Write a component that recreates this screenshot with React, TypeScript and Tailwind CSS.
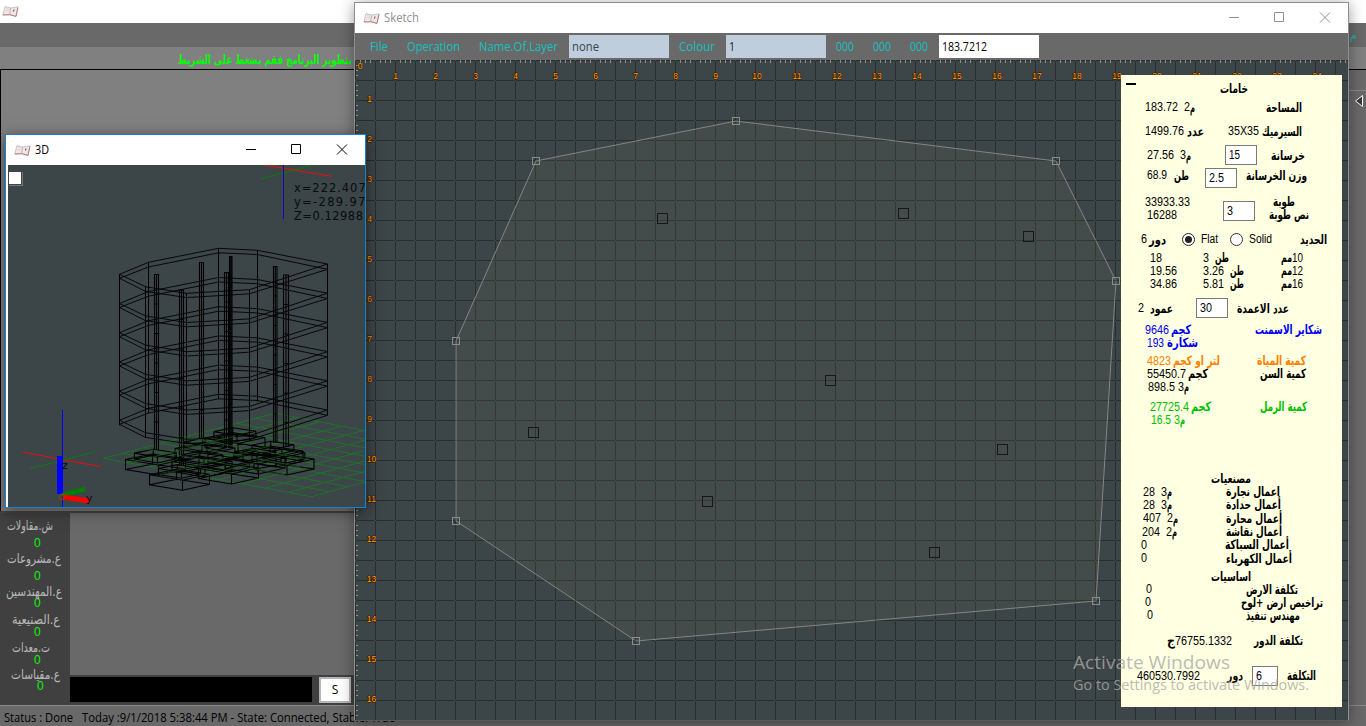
import { useLayoutEffect, useRef, type ReactNode } from "react";

/** Single line of text squeezed or stretched to the width of its box. */
function Fit({ c, t = "", children }: { c: string; t?: string; children: ReactNode }) {
  const box = useRef<HTMLSpanElement>(null);
  const text = useRef<HTMLSpanElement>(null);
  useLayoutEffect(() => {
    const fit = () => {
      if (!box.current || !text.current) return;
      text.current.style.transform = "none";
      const natural = text.current.getBoundingClientRect().width;
      if (natural > 0) text.current.style.transform = `scaleX(${box.current.clientWidth / natural})`;
    };
    fit();
    document.fonts.ready.then(fit);
    window.addEventListener("load", fit);
    return () => window.removeEventListener("load", fit);
  }, []);
  return (
    <span ref={box} className={"flex shrink-0 justify-start leading-none " + c}>
      <span ref={text} dir="auto" className={"inline-block shrink-0 origin-left whitespace-nowrap " + t}>
        {children}
      </span>
    </span>
  );
}

const N = ({ c, children }: { c: string; children: ReactNode }) => <Fit c={c}>{children}</Fit>;
const A = ({ c, children }: { c: string; children: ReactNode }) => (
  <Fit c={c} t="font-['DejaVu_Sans',sans-serif] text-[13px] leading-[13px] font-bold">
    {children}
  </Fit>
);
const Row = ({ c, children }: { c: string; children: ReactNode }) => (
  <div className={"flex shrink-0 items-center " + c}>{children}</div>
);
const Field = ({ c, children }: { c: string; children: ReactNode }) => (
  <div className={"flex h-5 shrink-0 items-center border border-[#7a7a7a] bg-white pl-[3px] " + c}>{children}</div>
);

function BookIcon() {
  return (
    <svg width="17" height="13" viewBox="0 0 17 13" className="shrink-0">
      <path d="M3 1.5 L8.5 3 L16 1.8 L14 11 L8 9.5 L.8 9.8 Z" fill="#ece8e7" stroke="#b9b3b1" strokeWidth=".7" />
      <path d="M.8 10 L8 9.8 L14 11.5 L16 2.5" fill="none" stroke="#b8625d" strokeWidth=".8" />
      <path d="M8.6 3 L7.6 9.5" stroke="#b3a8a6" strokeWidth=".8" />
      <path d="M11.5 6.500 L12 4.5" fill="none" stroke="#7a3b3b" strokeWidth="1" />
      <path d="M4 3.5 L7 4.2 M3.4 5.5 L6.6 6" stroke="#d5cfce" strokeWidth=".7" />
    </svg>
  );
}

function Caption({ tone, c }: { tone: string; c: string }) {
  return (
    <svg width="102" height="12" viewBox="0 0 102 12" stroke={tone} fill="none" className={"shrink-0 " + c}>
      <path d="M0 6.5H10" />
      <path d="M45.500 1.500h9v9h-9z" />
      <path d="M91 1.500l10 10M101 1.500l-10 10" />
    </svg>
  );
}

const range = (n: number) => Array.from({ length: n }, (_, i) => i);

const outline = [
  [536, 161], [736, 121], [1056, 161], [1116, 281],
  [1096, 601], [636, 641], [456, 521], [456, 341],
];
const columnsPlan = [
  [662, 218], [903, 213], [1028, 236], [830, 380],
  [533, 432], [1002, 449], [934, 552], [707, 501],
];

function SketchCanvas() {
  return (
    <svg width="993" height="660" viewBox="355 60 993 660" className="block">
      <rect x="355" y="60" width="993" height="660" fill="#3c4548" />
      <g shapeRendering="crispEdges">
        <g fill="#2a2c2d">
          {range(50).map((i) => <rect key={"v" + i} x={355 + i * 20} y="60" width="1" height="660" />)}
          {range(33).map((i) => <rect key={"h" + i} x="355" y={60 + i * 20} width="993" height="1" />)}
        </g>
        <g fill="#8c9090">
          {range(198).map((i) => <rect key={"t" + i} x={360 + i * 5} y="60" width="1" height="3" opacity={i % 4 === 3 ? 0 : 1} />)}
          {range(132).map((i) => <rect key={"l" + i} x="356" y={60 + i * 5} width="2" height="1" opacity={i % 4 === 0 ? 0 : 1} />)}
        </g>
      </g>
      <polygon points={outline.map((p) => p.join(",")).join(" ")} fill="#646658" fillOpacity=".2" stroke="#858585" strokeWidth="1" />
      <g fill="#0f7a14" shapeRendering="crispEdges">
        {range(50).map((i) => range(33).map((j) => (
          <rect key={i + "-" + j} x={355 + i * 20} y={60 + j * 20} width="1" height="1" />
        )))}
      </g>
      <g fill="none" stroke="#8c8c8c" shapeRendering="crispEdges">
        {outline.map(([x, y]) => <rect key={x + "," + y} x={x - 3.5} y={y - 3.5} width="7" height="7" />)}
      </g>
      <g fill="none" stroke="#151818" shapeRendering="crispEdges">
        {columnsPlan.map(([x, y]) => <rect key={x + "," + y} x={x - 4.5} y={y - 4.500} width="10" height="10" />)}
      </g>
      <g fontFamily="Liberation Sans, sans-serif" fontSize="8.500" fill="#ffa000" stroke="#3a1200" strokeWidth="1" paintOrder="stroke" textAnchor="middle">
        <text x="360" y="69">0</text>
        {range(24).map((i) => <text key={"x" + i} x={395.500 + i * 40 + (i > 8 ? 1.500 : 0)} y="79">{i + 1}</text>)}
        {range(16).map((i) => <text key={"y" + i} x={i > 8 ? 371.500 : 369.500} y={102 + i * 40}>{i + 1}</text>)}
      </g>
    </svg>
  );
}

const ring = [
  [119.5, 274.3, 4], [148.5, 262.3, 4.7], [218.5, 248.3, 4.500], [257.5, 250.3, 4.2],
  [327.5, 264, 5.300], [249.5, 289.7, 4.1], [186.5, 293.3, 4.3], [145.5, 286.7, 4.7],
];
const pillars = [
  [154.5, 158.5, 274.5, 450], [179.5, 183.5, 290, 466], [199.5, 203.5, 262.500, 438], [224.5, 228.5, 272.500, 448],
  [229.5, 232, 256.500, 448], [273.5, 277, 266.500, 443], [283.5, 288.500, 275, 447],
];
const footings = [
  [158.5, 465], [182.5, 480.300], [208, 454], [205, 467], [231.5, 474], [238, 443.500], [258, 464], [276, 457], [287, 465],
];

function slab(dy: number) {
  return ring.map(([x, y]) => `${x},${y + dy}`).join(" ");
}
function plate(x: number, y: number, s: number, h: number) {
  const l = [x - 33 * s, y - 5.500 * s];
  const r = [x + 27 * s, y - 6 * s];
  const b = [x - 6 * s, y - 11 * s];
  return (
    `M${l}L${x},${y}L${r}L${b}Z` +
    `M${l}v${h}L${x},${y + h}L${r[0]},${r[1] + h}v${-h}M${x},${y}v${h}M${b}v${h}L${l[0]},${l[1] + h}M${b[0]},${b[1] + h}L${r[0]},${r[1] + h}`
  );
}

function Model() {
  return (
    <svg width="357" height="342" viewBox="8 165 357 342" className="block bg-[#3c4548]">
      <g stroke="#22702c" strokeWidth="1">
        {range(10).map((i) => {
          const k = i / 9;
          return (
            <g key={i}>
              <path d={`M${103.3 + 208.4 * k},${458.3 + 38.4 * k}L${275 + 200 * k},${413.3 + 38.400 * k}`} />
              <path d={`M${103.3 + 171.7 * k},${458.3 - 45 * k}L${311.7 + 163.3 * k},${496.7 - 45 * k}`} />
            </g>
          );
        })}
      </g>
      <g fill="none" stroke="#000" strokeWidth=".9">
        {range(6).map((i) => (
          <g key={i}>
            <polygon points={slab(i * 29.2)} />
            <polygon points={ring.map(([x, y, h]) => `${x},${y + h + i * 29.2}`).join(" ")} />
          </g>
        ))}
        {ring.map(([x, y]) => <path key={x} d={`M${x},${y}v151`} strokeWidth="1" />)}
        {pillars.map(([a, b, t, e]) => (
          <g key={a}>
            <path d={`M${a},${e}V${t}H${b}V${e}M${(a + b) / 2},${t}V${e}`} strokeWidth="1.1" />
            {range(5).map((i) => <path key={i} d={`M${a},${t + 29.500 * (i + 1)}H${b}`} />)}
          </g>
        ))}
        {footings.map(([x, y]) => (
          <g key={x}>
            <path d={plate(x, y, 1, 10)} strokeWidth="1.100" />
            <path d={plate(x - 1, y - 8, 0.7, 6)} strokeWidth="1.1" />
          </g>
        ))}
      </g>
      <g stroke="#1c5a1c" strokeWidth=".7">
        <path d="M140 448L285 475M165 441L300 467M185 437L310 460M130 463L235 436M160 475L270 446M205 476L295 452" />
      </g>
      <g fill="none">
        <path d="M264.700 165L331.700 176.300M23 452.300L101 466.700" stroke="#ee0c0c" />
        <path d="M261.300 178.700L313.300 165M30 468.700L94.700 451.700" stroke="#0c7a12" />
        <path d="M283.500 165V219" stroke="#0b0bb0" />
        <path d="M62.500 410V507" stroke="#0000ff" />
        <path d="M60 456V494" stroke="#0000ff" strokeWidth="6" />
        <path d="M62 495.500L85 489" stroke="#008000" strokeWidth="4.500" />
        <path d="M63 497L89.500 501" stroke="#ff0000" strokeWidth="5" />
        <circle cx="62" cy="497" r="2.500" stroke="#8c4a10" />
      </g>
      <g fontFamily="DejaVu Sans, sans-serif" fill="#080c0c">
        <g fontSize="11.500" lengthAdjust="spacing">
          <text x="294" y="191.500" textLength="80">x=222.4073</text>
          <text x="294" y="205.500" textLength="80">y=-289.972</text>
          <text x="294" y="220" textLength="69">Z=0.12988</text>
        </g>
        <g fontSize="11">
          <text x="62" y="469">z</text>
          <text x="86" y="501.500">y</text>
          <text x="91" y="513">x</text>
        </g>
      </g>
    </svg>
  );
}

function Stat({ c, w, z, children }: { c: string; w: string; z: string; children: ReactNode }) {
  return (
    <div className={"flex shrink-0 flex-col " + c}>
      <Fit c={w} t="font-['DejaVu_Sans',sans-serif] text-[13.500px] leading-[15px] text-[#b8b8b8]">{children}</Fit>
      <span className={"mb-px text-[12px] leading-[13px] text-[#10f010] " + z}>0</span>
    </div>
  );
}

function MainWindow() {
  return (
    <div className="flex h-[726px] w-[1366px] flex-col bg-[#696969]">
      <div className="flex h-[23px] shrink-0 items-center bg-white pl-[2px]"><BookIcon /></div>
      <div className="flex h-6 shrink-0 items-center justify-end bg-[#696969] pr-[9px] text-[11px] text-[#18b8b8]">م</div>
      <div className="flex h-[22px] shrink-0 items-center bg-[#808080]">
        <Fit c="ml-[178px] w-[174px] pt-1" t="font-['DejaVu_Sans',sans-serif] text-[12.500px] leading-[14px] font-bold text-[#00ff00]">
          بتطوير البرنامج فقم بضغط على الشريط
        </Fit>
      </div>
      <div className="flex h-[442px] shrink-0 border-t border-l border-black bg-[#808080]">
        <div className="ml-auto flex w-[19px] flex-col bg-[#696969]">
          <div className="h-[21px] border-b border-[#8a8a8a]" />
          <svg width="11" height="14" viewBox="0 0 11 14" className="mt-[3px] ml-[7px]">
            <path d="M8.500 1.500V12.500L1.500 7Z" fill="#3a3a3a" stroke="#fff" />
          </svg>
        </div>
      </div>
      <div className="h-[2px] w-[355px] shrink-0 bg-[#454545]" />
      <div className="flex h-[192px] w-[355px] shrink-0 bg-[#404040]">
        <div className="flex w-[70px] shrink-0 flex-col pt-[5px]">
          <Stat c="h-[33px]" w="ml-[7px] w-[46px]" z="ml-[34px] mt-[4px]">ش.مقاولات</Stat>
          <Stat c="h-[33px]" w="ml-[7px] w-[54px]" z="ml-[34px] mt-[4px]">ع.مشروعات</Stat>
          <Stat c="h-[28px]" w="ml-[6px] w-[56px]" z="ml-[34px] -mt-[2px]">ع.المهندسين</Stat>
          <Stat c="h-[28px]" w="ml-[12px] w-[48px]" z="ml-[34px] -mt-[1px]">ع.الصنيعية</Stat>
          <Stat c="h-[27px]" w="ml-[12px] w-[38px]" z="ml-[34px] -mt-[1px]">ت.معدات</Stat>
          <Stat c="h-[28px]" w="ml-[11px] w-[49px]" z="ml-[37px] -mt-[2px]">ع.مقياسات</Stat>
        </div>
        <div className="flex w-[285px] shrink-0 flex-col">
          <div className="h-[162px] bg-[#696969]" />
          <div className="mt-[2px] flex">
            <div className="h-[25px] w-[242px] bg-black" />
            <div className="ml-[7px] flex h-[26px] w-8 items-center justify-center border-2 border-[#b5b5b5] bg-white font-['Open_Sans',sans-serif] text-[12px]">S</div>
          </div>
        </div>
      </div>
      <div className="flex h-[21px] shrink-0 items-center border-t border-[#8a8a8a] bg-[#696969] font-['Open_Sans',sans-serif] text-[12px] text-black">
        <Fit c="ml-1 mt-[3px] w-[69px]">Status : Done</Fit>
        <Fit c="ml-[9px] mt-[3px] w-[313px]">Today :9/1/2018 5:38:44 PM - State: Connected, Stable: True</Fit>
      </div>
    </div>
  );
}

function Materials() {
  return (
    <div className="flex h-[632px] w-[221px] flex-col bg-[#ffffe1] font-['Liberation_Sans',sans-serif] text-[12px] text-black">
      <Row c="h-[26px]">
        <span className="ml-[5px] mt-[8px] h-[2px] w-[10px] self-start bg-black" />
        <A c="ml-[84px] w-[28px]">خامات</A>
      </Row>
      <Row c="h-3"><N c="ml-6 w-[33px]">183.72</N><N c="ml-[6px] w-[6px]">2</N><A c="w-[5px]">م</A><A c="ml-[71px] w-[36px]">المساحة</A></Row>
      <Row c="mt-1 h-7"><N c="ml-6 w-[39px]">1499.76</N><A c="ml-[3px] w-[17px]">عدد</A><N c="ml-6 w-[31px]">35X35</N><A c="ml-[3px] w-[40px]">السيرميك</A></Row>
      <Row c="h-5"><N c="ml-[26px] w-[27px]">27.56</N><N c="ml-[6px] w-[6px]">3</N><A c="w-[5px]">م</A><Field c="ml-[34px] w-8"><N c="w-[11px]">15</N></Field><A c="ml-[14px] w-[34px]">خرسانة</A></Row>
      <Row c="mt-[3px] h-5">
        <N c="-mt-[6px] ml-[26px] w-[20px]">68.9</N><A c="-mt-[6px] ml-[7px] w-[15px]">طن</A>
        <Field c="ml-4 w-8"><N c="w-[15px]">2.5</N></Field><A c="-mt-[6px] ml-[9px] w-[61px]">وزن الخرسانة</A>
      </Row>
      <div className="mt-[7px] flex h-[26px] shrink-0">
        <div className="w-[102px] shrink-0">
          <Row c="h-[13px]"><N c="ml-6 w-[45px]">33933.33</N></Row>
          <Row c="h-[13px]"><N c="ml-[26px] w-[30px]">16288</N></Row>
        </div>
        <Field c="w-8 self-end"><N c="w-[6px]">3</N></Field>
        <div>
          <Row c="h-[13px]"><A c="ml-[18px] w-[22px]">طوبة</A></Row>
          <Row c="h-[13px]"><A c="ml-[14px] w-[40px]">نص طوبة</A></Row>
        </div>
      </div>
      <Row c="mt-2 h-5">
        <N c="ml-5 w-[6px]">6</N><A c="ml-[2px] w-[17px]">دور</A>
        <span className="ml-4 flex size-[13px] shrink-0 items-center justify-center rounded-full border border-[#222] bg-white"><span className="size-[7px] rounded-full bg-[#222]" /></span>
        <N c="ml-[6px] w-[17px]">Flat</N>
        <span className="ml-3 size-[13px] shrink-0 rounded-full border border-[#333] bg-white" />
        <N c="ml-[6px] w-[23px]">Solid</N><A c="ml-7 w-[27px]">الحديد</A>
      </Row>
      <Row c="mt-[2px] h-[13px]"><N c="ml-[29px] w-[12px]">18</N><N c="ml-[41px] w-[6px]">3</N><A c="ml-[6px] w-[14px]">طن</A><A c="ml-[52px] w-[11px]">مم</A><N c="w-[11px]">10</N></Row>
      <Row c="h-[13px]"><N c="ml-[29px] w-[27px]">19.56</N><N c="ml-[26px] w-[21px]">3.26</N><A c="ml-[6px] w-[14px]">طن</A><A c="ml-[37px] w-[11px]">مم</A><N c="w-[11px]">12</N></Row>
      <Row c="h-[13px]"><N c="ml-[29px] w-[27px]">34.86</N><N c="ml-[26px] w-[21px]">5.81</N><A c="ml-[6px] w-[14px]">طن</A><A c="ml-[37px] w-[11px]">مم</A><N c="w-[11px]">16</N></Row>
      <Row c="mt-2 h-5"><N c="ml-[17px] w-[6px]">2</N><A c="ml-[6px] w-[23px]">عمود</A><Field c="ml-[23px] w-8"><N c="w-[12px]">30</N></Field><A c="ml-[9px] w-[52px]">عدد الاعمدة</A></Row>
      <Row c="mt-[5px] h-[13px] text-[#0000f0]"><N c="ml-6 w-[24px]">9646</N><A c="ml-[2px] w-[20px]">كجم</A><A c="ml-16 w-[67px]">شكاير الاسمنت</A></Row>
      <Row c="h-[13px] text-[#0000f0]"><N c="ml-[26px] w-[17px]">193</N><A c="ml-[3px] w-[31px]">شكارة</A></Row>
      <Row c="mt-[5px] h-[13px] text-[#ff8000]"><N c="ml-[26px] w-[24px]">4823</N><A c="ml-[2px] w-[47px]">لتر او كجم</A><A c="ml-[37px] w-[49px]">كمية المياة</A></Row>
      <Row c="h-[13px]"><N c="ml-[26px] w-[39px]">55450.7</N><A c="ml-[2px] w-[20px]">كجم</A><A c="ml-[52px] w-[46px]">كمية السن</A></Row>
      <Row c="h-[13px]"><N c="ml-[27px] w-[27px]">898.5</N><N c="ml-[3px] w-[6px]">3</N><A c="w-[5px]">م</A></Row>
      <Row c="mt-[7px] h-[13px] text-[#00c000]"><N c="ml-[29px] w-[39px]">27725.4</N><A c="ml-[2px] w-[20px]">كجم</A><A c="ml-[49px] w-[47px]">كمية الرمل</A></Row>
      <Row c="h-[13px] text-[#00c000]"><N c="ml-[30px] w-[20px]">16.5</N><N c="ml-[3px] w-[6px]">3</N><A c="w-[5px]">م</A></Row>
      <Row c="mt-[46px] h-[13px]"><A c="ml-[90px] w-[40px]">مصنعيات</A></Row>
      <Row c="h-[13.300px]"><N c="ml-[22px] w-[12px]">28</N><N c="ml-[6px] w-[6px]">3</N><A c="w-[5px]">م</A><A c="ml-[54px] w-[54px]">اعمال نجارة</A></Row>
      <Row c="h-[13.300px]"><N c="ml-[22px] w-[12px]">28</N><N c="ml-[6px] w-[6px]">3</N><A c="w-[5px]">م</A><A c="ml-[54px] w-[55px]">أعمال حدادة</A></Row>
      <Row c="h-[13.300px]"><N c="ml-[22px] w-[18px]">407</N><N c="ml-[6px] w-[6px]">2</N><A c="w-[5px]">م</A><A c="ml-[48px] w-[56px]">أعمال محارة</A></Row>
      <Row c="h-[13.300px]"><N c="ml-[21px] w-[18px]">204</N><N c="ml-[6px] w-[6px]">2</N><A c="w-[5px]">م</A><A c="ml-[49px] w-[56px]">أعمال نقاشة</A></Row>
      <Row c="h-[13.300px]"><N c="ml-5 w-[6px]">0</N><A c="ml-[78px] w-[64px]">أعمال السباكة</A></Row>
      <Row c="h-[13.300px]"><N c="ml-5 w-[6px]">0</N><A c="ml-[79px] w-[66px]">أعمال الكهرباء</A></Row>
      <Row c="mt-[5px] h-[13px]"><A c="ml-[90px] w-[40px]">اساسيات</A></Row>
      <Row c="h-[13px]"><N c="ml-[25px] w-[6px]">0</N><A c="ml-[94px] w-[52px]">تكلفة الارض</A></Row>
      <Row c="h-[13px]"><N c="ml-6 w-[6px]">0</N><A c="ml-[90px] w-[82px]">تراخيص ارض +لوح</A></Row>
      <Row c="h-[13px]"><N c="ml-[26px] w-[6px]">0</N><A c="ml-[93px] w-[54px]">مهندس تنفيذ</A></Row>
      <Row c="mt-[9px] h-5"><A c="ml-[46px] w-[8px]">ج</A><N c="w-[57px]">76755.1332</N><A c="ml-[22px] w-[49px]">تكلفة الدور</A></Row>
      <Row c="mt-[15px] h-5"><N c="ml-4 w-[63px]">460530.7992</N><A c="ml-[27px] w-[16px]">دور</A><Field c="ml-[9px] w-[26px]"><N c="w-[6px]">6</N></Field><A c="ml-[9px] w-[29px]">التكلفة</A></Row>
    </div>
  );
}

function SketchWindow() {
  return (
    <div className="absolute top-[2px] left-[354px] flex w-[995px] flex-col border border-[#8f8f8f] border-b-[#5a5a5a] shadow-[0_2px_14px_rgba(0,0,0,0.4)]">
      <div className="flex h-[30px] shrink-0 items-center bg-white">
        <span className="ml-2"><BookIcon /></span>
        <Fit c="ml-1 w-[35px]" t="font-['Open_Sans',sans-serif] text-[12px] leading-[16px] text-[#8f8f8f]">Sketch</Fit>
        <Caption tone="#8f8f8f" c="ml-auto mt-[-3px] mr-[17px]" />
      </div>
      <div className="flex h-[27px] shrink-0 items-center bg-[#696969] font-['Open_Sans',sans-serif] text-[12px] text-[#12c2c0]">
        <Fit c="ml-[15px] w-[18px]">File</Fit>
        <Fit c="ml-[19px] w-[53px]">Operation</Fit>
        <Fit c="ml-[19px] w-[79px]">Name.Of.Layer</Fit>
        <div className="ml-[11px] flex h-[23px] w-[100px] items-center bg-[#c0cddc] pl-[3px] text-[#36474f]"><Fit c="w-[27px]">none</Fit></div>
        <Fit c="ml-[10px] w-[36px]">Colour</Fit>
        <div className="ml-[11px] flex h-[23px] w-[100px] items-center bg-[#c0cddc] pl-[3px] text-[#1c1c28]"><Fit c="w-[6px]">1</Fit></div>
        <Fit c="ml-[10px] w-[18px]">000</Fit>
        <Fit c="ml-[19px] w-[18px]">000</Fit>
        <Fit c="ml-[19px] w-[18px]">000</Fit>
        <div className="ml-[11px] flex h-[23px] w-[100px] items-center bg-white pl-[3px] text-black"><Fit c="w-[45px]">183.7212</Fit></div>
      </div>
      <SketchCanvas />
      <div className="absolute top-[72px] left-[766px]"><Materials /></div>
    </div>
  );
}

function ModelWindow() {
  return (
    <div className="absolute top-[134px] left-[5px] flex h-[374px] w-[361px] flex-col border border-[#1a80d0] bg-white shadow-[0_3px_14px_rgba(0,0,0,0.5)]">
      <div className="flex h-[30px] shrink-0 items-center">
        <span className="ml-2"><BookIcon /></span>
        <Fit c="ml-1 w-[14px]" t="font-['Open_Sans',sans-serif] text-[12px] leading-[16px] text-black">3D</Fit>
        <Caption tone="#000" c="ml-auto -mt-[3px] mr-[17px]" />
      </div>
      <div className="pl-[2px]"><Model /></div>
      <div className="absolute top-9 left-[2px] size-[14px] border border-[#444] bg-white shadow-[1px_1px_0_#777]" />
    </div>
  );
}

export default function App() {
  return (
    <div className="relative h-[726px] w-[1366px] overflow-hidden font-['Liberation_Sans',sans-serif]">
      <MainWindow />
      <SketchWindow />
      <ModelWindow />
      <div className="absolute top-[650px] left-[1073px] flex flex-col font-['Open_Sans',sans-serif] text-[#a9a9a9]/80">
        <Fit c="w-[157px]" t="text-[19px] leading-[24px]">Activate Windows</Fit>
        <Fit c="w-[236px]" t="text-[14px] leading-[21px]">Go to Settings to activate Windows.</Fit>
      </div>
    </div>
  );
}
